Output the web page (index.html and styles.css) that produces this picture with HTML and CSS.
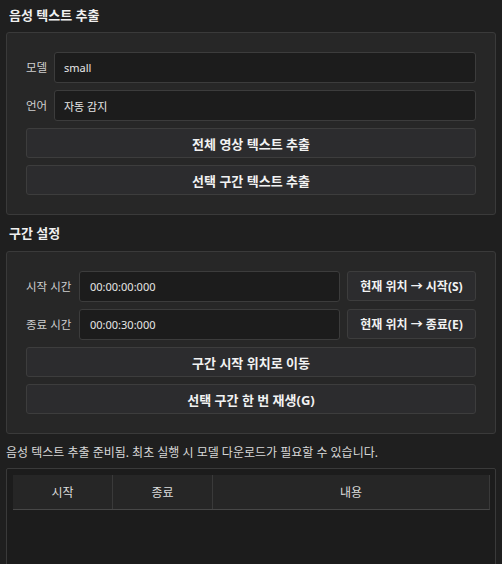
FILE: index.html
```html
<!DOCTYPE html>
<html lang="ko">
<head>
<meta charset="utf-8">
<title>음성 텍스트 추출</title>
<link rel="stylesheet" href="styles.css">
</head>
<body>
<div class="app">
  <div class="section-title first">음성 텍스트 추출</div>
  <div class="group">
    <div class="form-grid">
      <span class="label">모델</span>
      <div class="field">small</div>
      <span class="label">언어</span>
      <div class="field">자동 감지</div>
    </div>
    <button class="btn">전체 영상 텍스트 추출</button>
    <button class="btn">선택 구간 텍스트 추출</button>
  </div>

  <div class="section-title">구간 설정</div>
  <div class="group">
    <div class="form-grid three">
      <span class="label">시작 시간</span>
      <div class="field mono">00:00:00:000</div>
      <button class="btn small">현재 위치 → 시작(S)</button>
      <span class="label">종료 시간</span>
      <div class="field mono">00:00:30:000</div>
      <button class="btn small">현재 위치 → 종료(E)</button>
    </div>
    <button class="btn">구간 시작 위치로 이동</button>
    <button class="btn">선택 구간 한 번 재생(G)</button>
  </div>

  <div class="status">음성 텍스트 추출 준비됨. 최초 실행 시 모델 다운로드가 필요할 수 있습니다.</div>

  <div class="table-box">
    <div class="table-head">
      <div class="th c1">시작</div>
      <div class="th c2">종료</div>
      <div class="th c3">내용</div>
    </div>
    <div class="table-body"></div>
  </div>
</div>
</body>
</html>
```

FILE: styles.css
```css
* { box-sizing: border-box; }

html, body {
  margin: 0;
  padding: 0;
  background: #1f1f1f;
  height: 100%;
  overflow: hidden;
}

body {
  font-family: "Noto Sans", "Noto Sans CJK KR", sans-serif;
  font-size: 12px;
  color: #d8d8d8;
}

.app {
  padding: 0 6px;
  display: flex;
  flex-direction: column;
}

.section-title {
  font-size: 13px;
  font-weight: 700;
  color: #f0f0f0;
  line-height: 18px;
  padding: 9px 3px 9px 3px;
}

.section-title.first {
  padding: 6px 3px 8px 3px;
}

.group {
  background: #272727;
  border: 1px solid #3a3a3a;
  border-radius: 3px;
  padding: 19px;
  display: flex;
  flex-direction: column;
  gap: 7px;
}

.form-grid {
  display: grid;
  grid-template-columns: 23px 1fr;
  column-gap: 5px;
  row-gap: 7px;
  align-items: center;
}

.form-grid.three {
  grid-template-columns: 46px 1fr 129px;
  column-gap: 7px;
}

.label {
  color: #cfcfcf;
  font-size: 11.5px;
  line-height: 16px;
  white-space: nowrap;
}

.field {
  height: 31px;
  background: #1c1c1c;
  border: 1px solid #3c3c3c;
  border-radius: 3px;
  padding: 0 9px;
  display: flex;
  align-items: center;
  color: #e6e6e6;
  font-size: 11px;
}

.field.mono {
  padding-left: 10px;
}

.btn {
  height: 30px;
  background: #2c2c2e;
  border: 1px solid #3d3d3d;
  border-radius: 3px;
  color: #f2f2f2;
  font-family: "Noto Sans", "Noto Sans CJK KR", sans-serif;
  font-size: 13px;
  font-weight: 700;
  padding: 0 4px;
  margin: 0;
  white-space: nowrap;
}

.btn.small {
  align-self: start;
  font-size: 12px;
}

.status {
  line-height: 18px;
  padding: 10px 0 6px 0;
  color: #d8d8d8;
  font-size: 12px;
}

.table-box {
  height: 130px;
  border: 1px solid #3a3a3a;
  border-radius: 2px;
  background: #1c1c1c;
  padding: 6px 5px 0 6px;
  display: flex;
  flex-direction: column;
}

.table-head {
  display: flex;
  height: 35px;
  background: #262626;
  border-bottom: 1px solid #474747;
  border-right: 1px solid #3a3a3a;
}

.th {
  display: flex;
  align-items: center;
  justify-content: center;
  color: #dcdcdc;
  font-size: 12px;
  border-right: 1px solid #3a3a3a;
}

.th.c1 { width: 100px; }
.th.c2 { width: 100px; }
.th.c3 { flex: 1; border-right: none; }

.table-body {
  flex: 1;
}
```
